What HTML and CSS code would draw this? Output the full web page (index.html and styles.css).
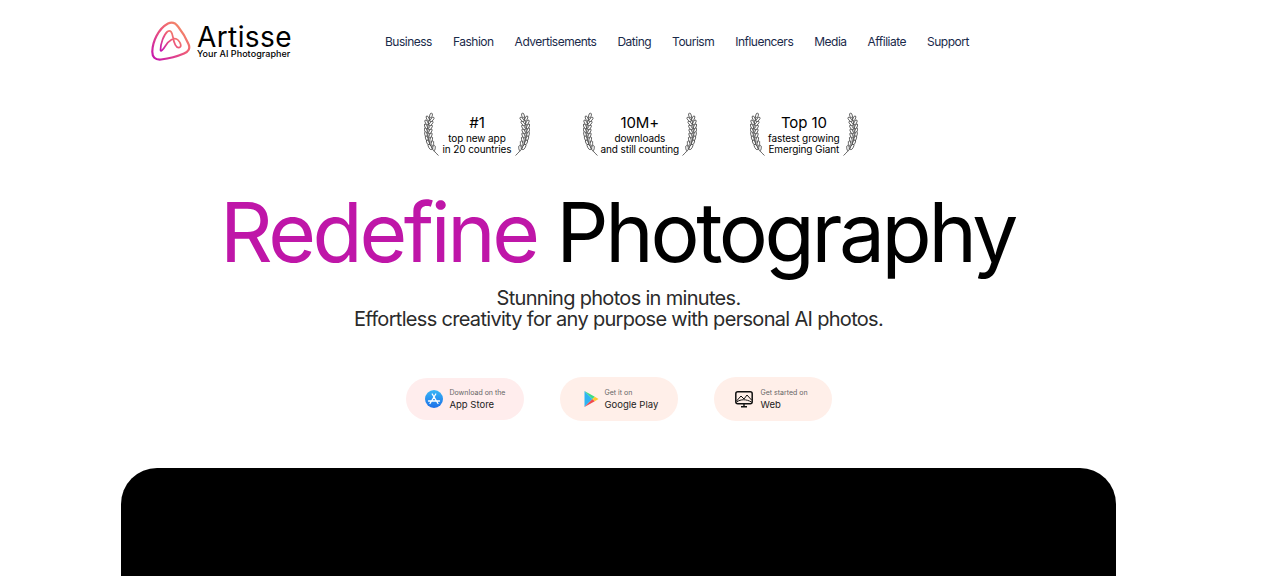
FILE: index.html
```html
<!DOCTYPE html>
<html lang="en">
<head>
  <meta charset="UTF-8">
  <meta name="viewport" content="width=device-width, initial-scale=1.0">
  <title>Artisse</title>
  <link rel="stylesheet" href="styles.css">
</head>
<body>
  <svg class="defs" width="0" height="0">
    <defs>
      <linearGradient id="logoGrad" x1="0" y1="1" x2="1" y2="0">
        <stop offset="0" stop-color="#c413b0"/>
        <stop offset="0.55" stop-color="#ee5a78"/>
        <stop offset="1" stop-color="#f6a05e"/>
      </linearGradient>
      <symbol id="laurel" viewBox="0 0 16 44">
        <path d="M14.500 43.500 C7 37 3.500 29 3.800 19 C4 12 5 6 7 2" fill="none" stroke="#444" stroke-width="0.8"/>
        <g fill="#fff" stroke="#333" stroke-width="0.7">
          <ellipse cx="7" cy="3.500" rx="1.300" ry="2.500" transform="rotate(15 7 3.500)"/>
          <ellipse cx="3.800" cy="6.500" rx="1.200" ry="2.800" transform="rotate(-25 3.800 6.500)"/>
          <ellipse cx="8" cy="7.500" rx="1.200" ry="2.800" transform="rotate(40 8 7.500)"/>
          <ellipse cx="2.600" cy="10.500" rx="1.200" ry="2.800" transform="rotate(-30 2.600 10.500)"/>
          <ellipse cx="7" cy="11.500" rx="1.200" ry="2.800" transform="rotate(40 7 11.500)"/>
          <ellipse cx="2" cy="14.500" rx="1.200" ry="2.800" transform="rotate(-25 2 14.500)"/>
          <ellipse cx="6.500" cy="15.500" rx="1.200" ry="2.800" transform="rotate(35 6.500 15.500)"/>
          <ellipse cx="1.800" cy="18.500" rx="1.200" ry="2.800" transform="rotate(-20 1.800 18.500)"/>
          <ellipse cx="6.300" cy="19.500" rx="1.200" ry="2.800" transform="rotate(30 6.300 19.500)"/>
          <ellipse cx="2" cy="22.500" rx="1.200" ry="2.800" transform="rotate(-15 2 22.500)"/>
          <ellipse cx="6.500" cy="23.500" rx="1.200" ry="2.800" transform="rotate(25 6.500 23.500)"/>
          <ellipse cx="2.800" cy="26.500" rx="1.200" ry="2.800" transform="rotate(-20 2.800 26.500)"/>
          <ellipse cx="7.200" cy="27.500" rx="1.200" ry="2.800" transform="rotate(15 7.200 27.500)"/>
          <ellipse cx="4" cy="30.500" rx="1.200" ry="2.800" transform="rotate(-25 4 30.500)"/>
          <ellipse cx="8.400" cy="31.500" rx="1.200" ry="2.800" transform="rotate(10 8.400 31.500)"/>
          <ellipse cx="6" cy="35" rx="1.300" ry="3" transform="rotate(-30 6 35)"/>
          <ellipse cx="10" cy="36" rx="1.300" ry="2.800" transform="rotate(5 10 36)"/>
        </g>
      </symbol>
    </defs>
  </svg>

  <div class="page">
    <header class="header">
      <a class="logo" href="#">
        <svg class="logo-mark" width="40" height="40" viewBox="0 0 40 40" fill="none">
          <path d="M17 2.500 C21 0.500 24.500 2 27 5.500 C31 10.500 35 17 37.500 23 C39.500 27.500 37.500 30.500 33 32.500 C26 35.500 18 37.500 10 38.500 C4 39 1.200 36 1.300 30.500 C1.500 21 7 8 17 2.500 Z" stroke="url(#logoGrad)" stroke-width="2.200"/>
          <path d="M9.500 29 C9.500 23 12.500 14 16.500 10.500 C19.500 8.500 21 11 21.800 15.500 C23 22 25 27.500 28.500 26.500 C31 25.500 29.500 21.500 27 19 C23.500 15.500 18 19 14 25.500 C12.500 28 9.500 31.500 9.500 29 Z" stroke="url(#logoGrad)" stroke-width="1.700"/>
        </svg>
        <span class="logo-text">
          <span class="logo-name">Artisse</span>
          <span class="logo-tag">Your AI Photographer</span>
        </span>
      </a>
      <nav class="nav">
        <a href="#">Business</a>
        <a href="#">Fashion</a>
        <a href="#">Advertisements</a>
        <a href="#">Dating</a>
        <a href="#">Tourism</a>
        <a href="#">Influencers</a>
        <a href="#">Media</a>
        <a href="#">Affiliate</a>
        <a href="#">Support</a>
      </nav>
    </header>

    <main class="hero">
      <div class="awards">
        <div class="award">
          <svg class="laurel" width="16" height="44"><use href="#laurel"/></svg>
          <div class="award-text">
            <strong>#1</strong>
            <span>top new app</span>
            <span>in 20 countries</span>
          </div>
          <svg class="laurel flip" width="16" height="44"><use href="#laurel"/></svg>
        </div>
        <div class="award">
          <svg class="laurel" width="16" height="44"><use href="#laurel"/></svg>
          <div class="award-text">
            <strong>10M+</strong>
            <span>downloads</span>
            <span>and still counting</span>
          </div>
          <svg class="laurel flip" width="16" height="44"><use href="#laurel"/></svg>
        </div>
        <div class="award">
          <svg class="laurel" width="16" height="44"><use href="#laurel"/></svg>
          <div class="award-text">
            <strong>Top 10</strong>
            <span>fastest growing</span>
            <span>Emerging Giant</span>
          </div>
          <svg class="laurel flip" width="16" height="44"><use href="#laurel"/></svg>
        </div>
      </div>

      <h1 class="title"><span class="accent">Redefine</span> Photography</h1>
      <p class="sub">Stunning photos in minutes.<br>Effortless creativity for any purpose with personal AI photos.</p>

      <div class="stores">
        <a class="store store-apple" href="#">
          <svg width="18" height="18" viewBox="0 0 18 18" fill="none">
            <defs>
              <linearGradient id="appGrad" x1="0" y1="0" x2="0" y2="1">
                <stop offset="0" stop-color="#38b6f6"/>
                <stop offset="1" stop-color="#1c6fe8"/>
              </linearGradient>
            </defs>
            <circle cx="9" cy="9" r="9" fill="url(#appGrad)"/>
            <path d="M10.800 4 L5 13.500 M7.200 4 L13 13.500 M3.500 11 H14.500" stroke="#fff" stroke-width="1.300" stroke-linecap="round"/>
          </svg>
          <span class="store-text"><small>Download on the</small><span>App Store</span></span>
        </a>
        <a class="store store-google" href="#">
          <svg width="15" height="18" viewBox="0 0 16 18">
            <path d="M0.500 0.500 L9 9 L0.500 17.500 Z" fill="#2fb4f2"/>
            <path d="M0.500 0.500 L11.500 6.500 L9 9 Z" fill="#3ddc84"/>
            <path d="M0.500 17.500 L11.500 11.500 L9 9 Z" fill="#ef4a4e"/>
            <path d="M11.500 6.500 L15.500 9 L11.500 11.500 L9 9 Z" fill="#fdc92f"/>
          </svg>
          <span class="store-text"><small>Get it on</small><span>Google Play</span></span>
        </a>
        <a class="store store-web" href="#">
          <svg width="18" height="17" viewBox="0 0 18 17" fill="none" stroke="#111">
            <rect x="0.800" y="0.800" width="16.400" height="12" rx="2" stroke-width="1.500"/>
            <path d="M1.500 10 L6 5 L9 8 L12 4 L16.500 9" stroke-width="1"/>
            <path d="M1.500 11 C6 8 11 8 16.500 11" stroke-width="1"/>
            <path d="M9 13 V15.500 M6 15.800 H12" stroke-width="1.400"/>
          </svg>
          <span class="store-text"><small>Get started on</small><span>Web</span></span>
        </a>
      </div>
    </main>

    <div class="video"></div>
  </div>
</body>
</html>
```

FILE: styles.css
```css
html, body {
  margin: 0;
  padding: 0;
  height: 576px;
  overflow: hidden;
  background-color: #fff;
}
body {
  font-family: Inter, "Liberation Sans", sans-serif;
  color: #000;
}
a {
  text-decoration: none;
  color: inherit;
}
.defs {
  display: block;
}
.page {
  width: 995px;
  height: 576px;
  margin-left: 121px;
  overflow: hidden;
}
/* Header */
.header {
  display: flex;
  align-items: center;
  height: 82px;
  padding-left: 30px;
}
.logo {
  display: flex;
  align-items: center;
  gap: 6px;
  width: 234px;
}
.logo-text {
  display: flex;
  flex-direction: column;
  margin-top: 1px;
}
.logo-name {
  font-size: 28px;
  line-height: 23px;
  letter-spacing: 0.4px;
}
.logo-tag {
  font-size: 9px;
  line-height: 9px;
  font-weight: 500;
  letter-spacing: 0.05px;
}
.nav {
  display: flex;
  gap: 21px;
}
.nav a {
  font-size: 12px;
  letter-spacing: -0.5px;
  color: #1a2a4a;
}
/* Awards */
.hero {
  display: flex;
  flex-direction: column;
  align-items: center;
}
.awards {
  display: flex;
  gap: 53px;
  margin-top: 30px;
  margin-left: 45px;
}
.award {
  display: flex;
  align-items: center;
  gap: 2px;
}
.flip {
  transform: scaleX(-1);
}
.award-text {
  display: flex;
  flex-direction: column;
  align-items: center;
  margin-top: -1px;
  font-size: 10px;
  line-height: 11px;
  letter-spacing: -0.1px;
}
.award-text strong {
  font-size: 15px;
  font-weight: 400;
  line-height: 21px;
}
/* Headline */
.title {
  margin: 27px 0 0 -2px;
  font-size: 82px;
  line-height: 100px;
  font-weight: 400;
  letter-spacing: -3.4px;
  white-space: nowrap;
}
.accent {
  color: #bf16a8;
}
.sub {
  margin: 5px 0 0;
  font-size: 20px;
  line-height: 21px;
  letter-spacing: -0.69px;
  color: #2b2b2b;
  text-align: center;
}
/* Store buttons */
.stores {
  display: flex;
  align-items: center;
  gap: 36px;
  margin-top: 47px;
}
.store {
  display: flex;
  align-items: center;
  gap: 7px;
  box-sizing: border-box;
  width: 118px;
  height: 44px;
  padding-left: 19px;
  border-radius: 22px;
}
.store-apple {
  height: 42px;
  background-color: #ffeded;
}
.store-google,
.store-web {
  background-color: #ffefe9;
}
.store-google {
  padding-left: 24px;
  gap: 6px;
}
.store-web {
  padding-left: 21px;
  gap: 8px;
}
.store-text {
  display: flex;
  flex-direction: column;
  font-size: 9.500px;
  line-height: 13px;
  color: #222;
}
.store-text small {
  font-size: 7px;
  line-height: 11px;
  color: #666;
}
/* Video */
.video {
  height: 200px;
  margin-top: 47px;
  background-color: #000;
  border-radius: 36px 36px 0 0;
}
```
